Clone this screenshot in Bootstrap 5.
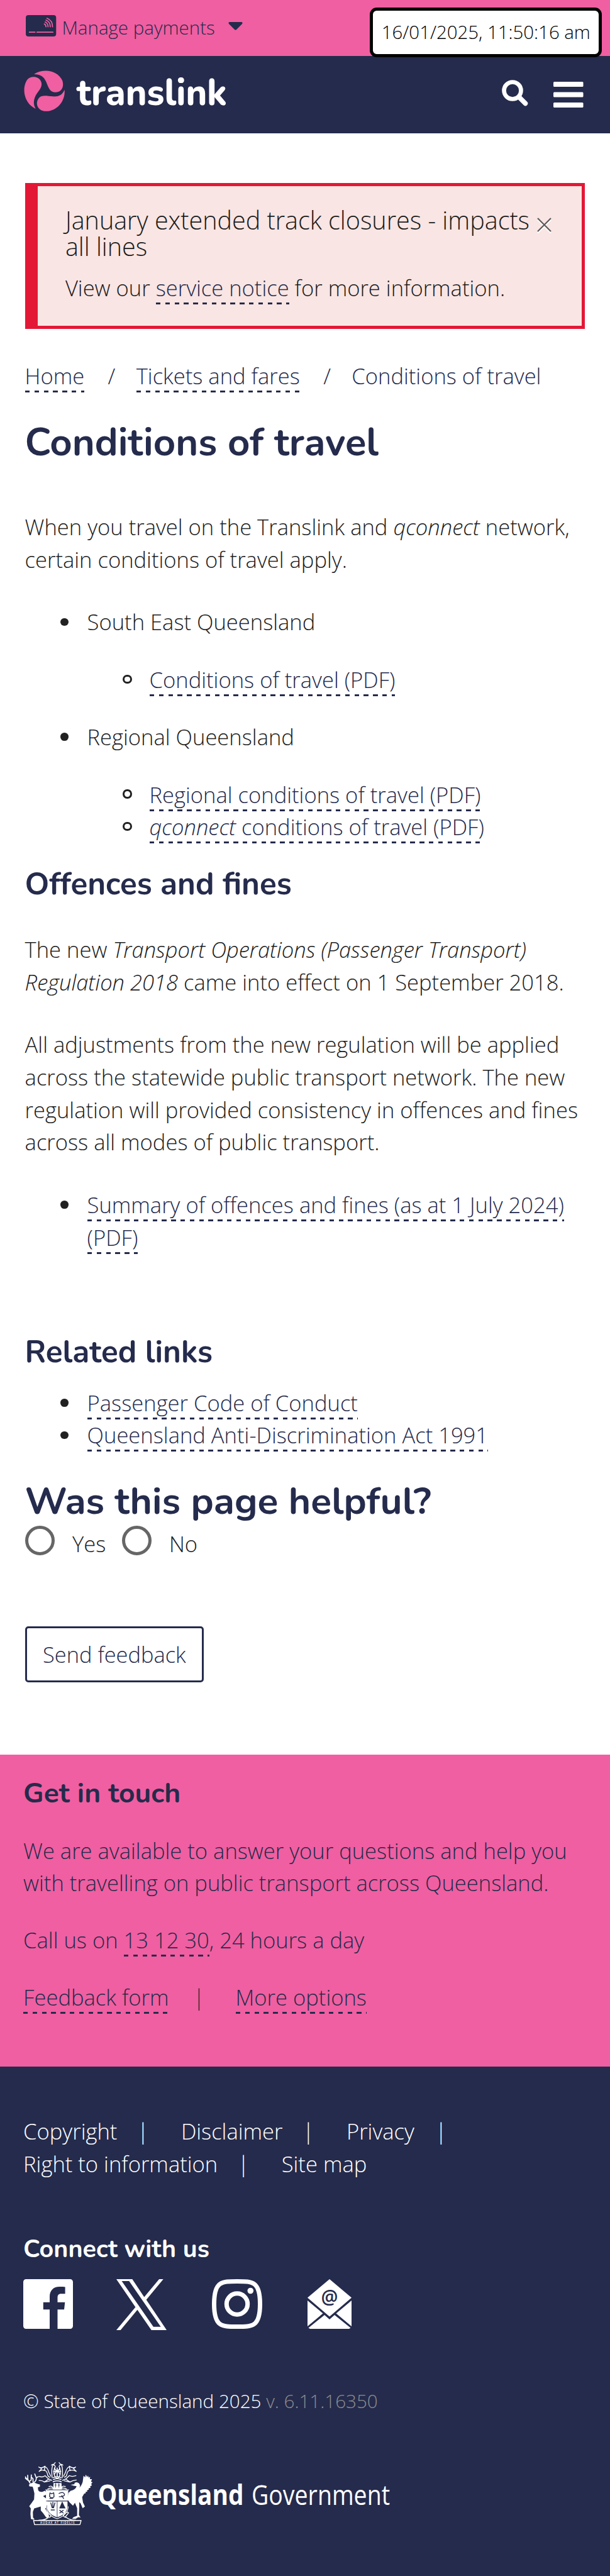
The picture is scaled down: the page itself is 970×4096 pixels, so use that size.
<!DOCTYPE html>
<html lang="en">
<head>
<meta charset="utf-8">
<meta name="viewport" content="width=device-width, initial-scale=1">
<title>Conditions of travel | Translink</title>
<link rel="stylesheet" href="https://cdn.jsdelivr.net/npm/bootstrap@5.3.0/dist/css/bootstrap.min.css">
<style>
:root{--navy:#252b4c;--pink:#f05fa1;--ink:#212121}
body{font-family:"Open Sans","Noto Sans",sans-serif;font-weight:300;font-size:34.55px;line-height:51.83px;color:var(--ink);background:#fff}
p,ul,h1,h2,h3{margin:0}
svg{display:block;flex:none;overflow:visible}
.head-font{font-family:Nunito,Lato,"Open Sans",sans-serif;font-weight:700;color:var(--navy);line-height:1.1}
.bar-top{height:89px;background:var(--pink);color:var(--navy);font-size:29.5px;padding:0 40.6px}
.bar-top .label{margin-left:9.5px;margin-top:-1.5px}
.stamp{top:12.3px;right:12.7px;width:369px;height:78.7px;border:5px solid #000;border-radius:11px;background:#fff;color:#000;font-size:29.4px;z-index:5}
.bar-main{height:123px;background:var(--navy);padding:0 42.7px 0 38.4px}
.page-body{padding:79.3px 39.6px 0}
.notice{height:232px;border:5px solid #e31836;border-left-width:20px;border-radius:0;background:#f9e5e3;padding:32.5px 46px 0 44.3px;margin:0;color:#1c1c1c}
.notice h2{font:300 39.5px/42.2px "Open Sans",sans-serif;color:#1c1c1c;margin-bottom:19px}
.dash-link{color:var(--navy);text-decoration:none;padding-bottom:3px;background:repeating-linear-gradient(90deg,var(--navy) 0 7.4px,transparent 7.4px 14.8px) left bottom/100% 3px no-repeat;-webkit-box-decoration-break:clone;box-decoration-break:clone}
.crumbs{margin:49.2px 0 47px;color:var(--navy)}
.crumb-sep{width:82.5px;padding-left:4px;text-align:center;display:inline-block}
.h-big{font-size:61.6px;line-height:66px}
.h-mid{font-size:49.35px;line-height:54.3px}
.marks{list-style:none;padding-left:99px}
.marks>li::before{content:"";display:inline-block;width:12.6px;height:12.6px;border-radius:50%;background:var(--ink);margin:0 29.8px 0 -42.4px;vertical-align:7px}
.marks .marks>li::before{width:14.4px;height:14.4px;margin:0 28px 0 -43.2px;background:none;border:3px solid var(--ink);vertical-align:7px}
.marks .marks>li{padding-left:.8px}
.pick{width:47px;height:47px;border:5px solid #666;border-radius:50%;background:#fff;margin:0;flex:none}
.send{width:284.5px;height:89px;border:3px solid var(--navy);border-radius:5px;color:var(--navy);font-size:34.4px;font-weight:300;padding:0;margin-top:105.4px}
.touch{height:495.8px;background:var(--pink);color:var(--navy);padding:37.4px 37.1px 0}
.foot{height:811px;background:var(--navy);color:#fff;padding:77px 37.1px 0}
.foot .head-font,.foot a{color:#fff}
.foot a{text-decoration:none}
.foot-sep{width:101.5px;padding-right:19.5px;text-align:center}
</style>
</head>
<body>
<div class="position-relative">
<header>
  <div class="bar-top d-flex align-items-center">
    <svg width="48.3" height="34" viewBox="28 27 176 124" style="margin-top:-7px"><rect x="28" y="27" width="176" height="124" rx="15" fill="#252b4c"/><g fill="none" stroke="#f05fa1" stroke-width="7" stroke-linecap="round"><path d="M49 126H81M93 126H185"/><path stroke-width="6" d="M151 45Q183 57 183 95M145 56Q170 66 170 95M140 67Q157 74 157 95M135 78Q145 82 145 95"/></g></svg>
    <span class="label">Manage payments</span>
    <svg width="23" height="13" viewBox="0 0 23 13" style="margin:-7px 0 0 21px"><path d="M2 0H21Q24 1 21.500 3.500L13 12Q11.500 13.500 10 12L1.500 3.500Q-1 1 2 0Z" fill="#252b4c"/></svg>
  </div>
  <div class="stamp position-absolute d-flex align-items-center justify-content-center"><span class="text-nowrap">16/01/2025, 11:50:16 am</span></div>
  <div class="bar-main d-flex align-items-center">
    <svg width="66" height="66" viewBox="20 15 240 240" fill="#f05fa1" style="margin-top:-13px"><path d="M78 40C135 4 214 17 242 76C255 113 237 145 204 145C169 145 163 119 149 85C136 54 116 40 78 40Z"/><path d="M88 240C18 207 8 119 38 74C56 49 104 49 119 82C130 109 112 128 95 152C75 182 72 213 88 240Z"/><path d="M255 130C262 207 195 266 130 252C96 242 86 205 105 180C123 158 151 166 187 169C222 171 243 159 255 130Z"/></svg>
    <svg width="270" height="86" viewBox="0 0 270 86" style="margin:-4px 0 0 15.500px"><text x="2" y="60.500" textLength="239" lengthAdjust="spacingAndGlyphs" font-family="Nunito,Lato,sans-serif" font-weight="800" font-size="60" fill="#fff">translink</text></svg>
    <svg class="ms-auto" width="42" height="42" viewBox="0 0 42 42" fill="none" stroke="#fff" stroke-width="6.600" stroke-linecap="round" style="margin-top:-6px"><circle cx="17" cy="17" r="13.500"/><path stroke-width="7.500" d="M27.500 27.500L37.500 37.500"/></svg>
    <svg width="47.500" height="41" viewBox="0 0 47.500 41" fill="#fff" style="margin:0 0 0 40px"><rect width="47.500" height="8" rx="1.500"/><rect y="16.500" width="47.500" height="8" rx="1.500"/><rect y="33" width="47.500" height="8" rx="1.500"/></svg>
  </div>
</header>

<main class="page-body">
  <div class="alert notice d-flex align-items-start">
    <div class="flex-grow-1 text-nowrap">
      <h2>January extended track closures - impacts<br>all lines</h2>
      <p>View our <a class="dash-link" href="#">service notice</a> for more information.</p>
    </div>
    <svg width="23" height="25" viewBox="0 0 23 25" fill="none" stroke-width="2.200" style="margin:17px 2px 0 0"><path stroke="#fff" d="M1 3.500L22 24.500M22 3.500L1 24.500"/><path stroke="#5f5a5a" d="M1 1L22 22M22 1L1 22"/></svg>
  </div>
  <nav class="crumbs d-flex" aria-label="breadcrumb"><span><a class="dash-link" href="#">Home</a></span><span class="crumb-sep">/</span><span><a class="dash-link" href="#">Tickets and fares</a></span><span class="crumb-sep">/</span><span>Conditions of travel</span></nav>
  <h1 class="head-font h-big">Conditions of travel</h1>
  <p style="margin-top:75px">When you travel on the Translink and <em>qconnect</em> network,<br>certain conditions of travel apply.</p>
  <ul class="marks" style="margin-top:47.3px">
    <li>South East Queensland
      <ul class="marks" style="margin:40px 0 38.900px"><li><a class="dash-link" href="#">Conditions of travel (PDF)</a></li></ul></li>
    <li>Regional Queensland
      <ul class="marks" style="margin-top:40px"><li><a class="dash-link" href="#">Regional conditions of travel (PDF)</a></li><li><a class="dash-link" href="#"><em>qconnect</em> conditions of travel (PDF)</a></li></ul></li>
  </ul>
  <h2 class="head-font h-mid" style="margin-top:37.4px">Offences and fines</h2>
  <p style="margin-top:51.3px">The new <em>Transport Operations (Passenger Transport)<br>Regulation 2018</em> came into effect on 1 September 2018.</p>
  <p style="margin-top:47px">All adjustments from the new regulation will be applied<br>across the statewide public transport network. The new<br>regulation will provided consistency in offences and fines<br>across all modes of public transport.</p>
  <ul class="marks" style="margin-top:47.500px"><li><a class="dash-link" href="#">Summary of offences and fines (as at 1 July 2024)<br>(PDF)</a></li></ul>
  <h2 class="head-font h-mid" style="margin-top:130px">Related links</h2>
  <ul class="marks" style="margin-top:26.800px"><li><a class="dash-link" href="#">Passenger Code of Conduct</a></li><li><a class="dash-link" href="#">Queensland Anti-Discrimination Act 1991</a></li></ul>
  <h1 class="head-font" style="margin-top:47.300px;font-size:60.600px;line-height:65px">Was this page helpful?</h1>
  <div class="d-flex align-items-start" style="margin-top:6px;height:54.300px">
    <input class="pick form-check-input" type="radio" name="helpful" id="y"><label for="y" style="margin:3px 25.500px 0 28.500px">Yes</label>
    <input class="pick form-check-input" type="radio" name="helpful" id="n"><label for="n" style="margin:3px 0 0 28px">No</label>
  </div>
  <button class="btn send d-block" type="button">Send feedback</button>
  <div style="height:115.200px"></div>
</main>

<section class="touch">
  <h2 class="head-font" style="font-size:44.4px;line-height:48.800px">Get in touch</h2>
  <p style="margin-top:40px">We are available to answer your questions and help you<br>with travelling on public transport across Queensland.</p>
  <p style="margin-top:38.800px">Call us on <a class="dash-link" href="#">13 12 30</a>, 24 hours a day</p>
  <div class="d-flex" style="margin-top:39.700px"><span><a class="dash-link" href="#">Feedback form</a></span><span class="text-center" style="width:106px;padding-right:10.600px">|</span><span><a class="dash-link" href="#">More options</a></span></div>
</section>

<footer class="foot">
  <div class="d-flex"><a href="#">Copyright</a><span class="foot-sep">|</span><a href="#">Disclaimer</a><span class="foot-sep">|</span><a href="#">Privacy</a><span style="margin-left:33px">|</span></div>
  <div class="d-flex"><a href="#">Right to information</a><span class="foot-sep">|</span><a href="#">Site map</a></div>
  <h2 class="head-font" style="font-size:39.500px;line-height:43.400px;margin-top:87.800px">Connect with us</h2>
  <div class="d-flex" style="margin-top:26px;height:81px">
    <svg width="79" height="79" viewBox="0 0 79 79" style="margin-top:.500px"><path fill="#fff" d="M4.400 0H74.600A4.400 4.400 0 0 1 79 4.400V74.600A4.400 4.400 0 0 1 74.600 79H54.500V48.300H65L66.300 36.800H54.500V29.500C54.500 26 55.600 23.300 60.500 23.300H66.600V12.500C65.500 12.300 61.700 12 57.400 12C48.300 12 42 17.700 42 28V36.800H31.800V48.300H42V79H4.400A4.400 4.400 0 0 1 0 74.600V4.400A4.400 4.400 0 0 1 4.400 0Z"/></svg>
    <svg width="80" height="81" viewBox="0 0 300 300" preserveAspectRatio="none" style="margin-left:69px"><path fill="#fff" fill-rule="evenodd" d="M178.570 121L280.270 0H255.270L166.200 106L95.120 0H0L114 165L0 300H25L125.500 181L209 300H300ZM32 11H76L265 281H221Z"/></svg>
    <svg width="80" height="79" viewBox="0 0 80 79" fill="none" stroke="#fff" stroke-width="7" style="margin:.500px 0 0 71.500px"><path d="M40 3.500C65 3.500 76.500 3.500 76.500 39.500S65 75.500 40 75.500S3.500 75.500 3.500 39.500S15 3.500 40 3.500Z"/><circle cx="40" cy="39.500" r="16.700"/><circle cx="61.300" cy="18.500" r="4.800" fill="#fff" stroke="none"/></svg>
    <svg width="70" height="79" viewBox="0 0 70 79" style="margin:.500px 0 0 72.200px"><g fill="#fff"><path d="M35 0L70 29.500L35 59.500L0 29.500Z"/><path d="M0 34L24.500 54.500L0 75ZM70 34L45.500 54.500L70 75Z"/><path d="M27 57L35 64L43 57L68.500 77.500L66 79H4L1.500 77.500Z"/></g><text x="35" y="39" text-anchor="middle" font-family="Open Sans,sans-serif" font-size="30" font-weight="600" fill="#252b4c">@</text></svg>
  </div>
  <p style="font-size:29.600px;line-height:44.400px;margin-top:91.300px">© State of Queensland 2025 <span style="color:#8b8b8f">v. 6.11.16350</span></p>
  <div class="d-flex" style="margin:73.800px 0 0 1.300px">
    <svg width="112.400" height="102.800" viewBox="20 20 410 375" fill="none" stroke="#fff" stroke-width="6" stroke-linecap="round" stroke-linejoin="round">
      <g fill="#fff" stroke="none">
        <path d="M49 154L62 146Q72 140 82 143L101 150L113 153V166L101 170L103 187Q110 198 126 196L142 190L150 196V212L136 218L132 222L154 238L158 262L148 290L143 292L164 326L166 342L150 346L132 320L118 304V281L80 292L72 312L73 345L82 356L76 357L61 353L58 325L60 292L51 279L64 262L79 240L81 205L75 180L71 166L52 164Z"/>
        <path d="M291 155L314 151Q310 142 324 140Q343 141 346 161L342 171Q353 163 361 139L366 102L375 112L379 96L387 110L392 101L396 114L404 108L403 122L415 122L409 137L418 140L410 150L415 158L404 164L407 171L395 176L397 182L386 187L388 194L378 196L379 203L370 206L358 226L363 258L374 281L361 291L349 263L341 255V285L339 330L349 345L335 343L321 352H299L309 342L329 335V291L316 259L305 276L286 258L272 240L278 202L291 190Q319 184 326 163L309 160Z"/>
        <path d="M192 145H238L240 181H190Z"/><path d="M151 188H275V248H151Z"/><path d="M154 251H273V282Q271 324 213 344Q155 324 154 282Z"/>
      </g>
      <path d="M56 146L43 124L32 116L29 109M43 124L42 100M50 137L62 127L63 98M76 142Q92 136 92 115L83 92M91 115L103 108M73 139L73 120L65 112M29 117L42 128"/>
      <path d="M213 119Q181 95 202 49Q194 29 180 41M213 119Q245 95 224 49Q232 29 246 41M202 26Q195 34 185 48Q179 70 184 115M224 26Q231 34 241 48Q247 70 242 115" stroke-width="5"/>
      <path d="M106 52Q122 63 143 47L138 72Q123 66 108 77L123 62ZM139 70Q153 74 157 94Q159 108 171 111M144 51Q159 58 165 84L176 105M108 106Q130 114 143 102L163 121L182 129M108 130Q127 128 139 139L163 122M320 52Q304 63 283 47L288 72Q303 66 324 77L308 62ZM287 70Q273 74 269 94Q267 108 255 111M282 51Q267 58 261 84L250 105M322 102Q300 110 283 102L263 121L244 129M324 127Q304 128 287 139L263 122M139 139L172 132M287 139L254 132M166 165Q186 157 190 178M158 180Q172 171 187 175M260 165Q240 157 236 178M268 180Q254 171 239 175" stroke-width="5"/>
      <path d="M197 58Q213 90 229 58M197 94Q213 60 229 94M192 77H234M213 58V107M191 113Q213 104 235 113M191 124Q213 115 235 124M190 137Q213 127 236 137" stroke-width="6"/>
      <path d="M146 184H280M150 187V245Q143 265 151 284Q153 332 213 352Q275 330 277 282M275 187V242" stroke-width="4"/>
      <path d="M166 344Q185 338 171 326Q153 309 142 315L161 345Q138 362 107 360M262 344Q240 337 255 323Q270 307 279 318L261 340Q286 362 320 360M76 362H352L345 386H82Z" stroke-width="5"/>
      <g stroke="#252b4c" stroke-width="5"><path d="M204 147V169M199 156H209M223 147V169M218 156H228M150 249H276M213 250V343" stroke-width="3"/><path d="M171 202L182 207L193 201L195 224Q180 238 169 223ZM170 234H188M224 205Q250 192 256 211Q254 224 238 219M225 224H244L250 235" /><path d="M176 260L184 288M188 256V288M200 260L192 288M178 301H197M228 303L248 318M248 303L228 318"/><path d="M242 252L225 292H262Z" fill="#252b4c" stroke="none"/></g>
      <text x="214" y="380" text-anchor="middle" textLength="198" font-family="Open Sans,sans-serif" font-size="16" font-weight="600" fill="#fff" stroke="none">AUDAX AT FIDELIS</text>
    </svg>
    <svg width="480" height="70" viewBox="0 0 480 70" fill="#fff" font-family="Open Sans,sans-serif" font-size="44" style="margin:25px 0 0 3px"><text x="1.500" y="43.500" textLength="232" lengthAdjust="spacingAndGlyphs" font-weight="700">Queensland</text><text x="246" y="43.500" textLength="220" lengthAdjust="spacingAndGlyphs" font-weight="400">Government</text></svg>
  </div>
</footer>
</div>
<script src="https://cdn.jsdelivr.net/npm/bootstrap@5.3.0/dist/js/bootstrap.bundle.min.js"></script>
</body>
</html>
